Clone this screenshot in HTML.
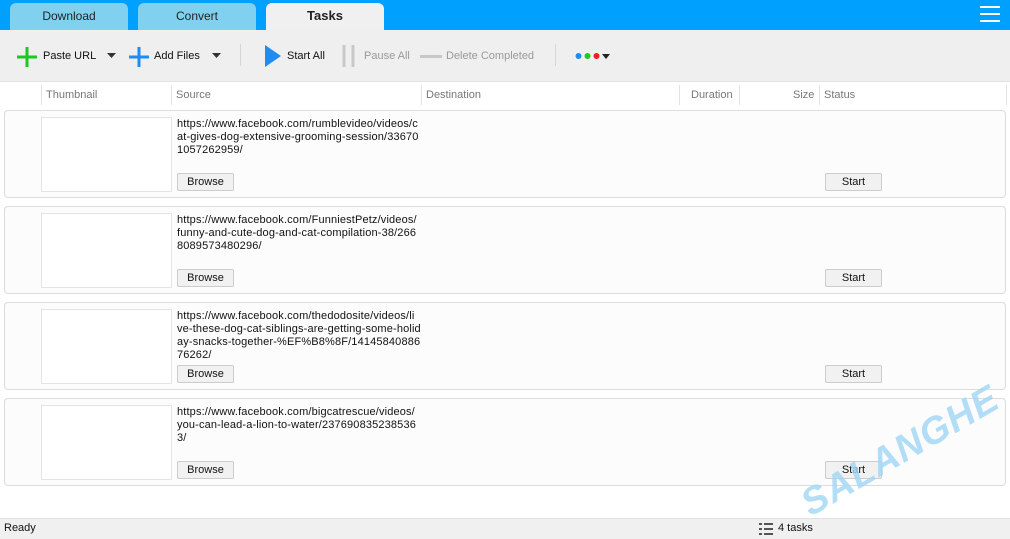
<!DOCTYPE html>
<html><head><meta charset="utf-8"><style>
*{box-sizing:border-box;margin:0;padding:0}
body{width:1010px;height:539px;overflow:hidden;background:#fff;font-family:"Liberation Sans",sans-serif;font-size:11px;color:#111;position:relative}
.top{position:absolute;left:0;top:0;width:1010px;height:30px;background:#00a0fe}
.tab{position:absolute;top:3px;height:27px;width:118px;border-radius:6px 6px 0 0;background:#80d1f0;text-align:center;line-height:26px;font-size:12px;color:#222}
.menu{position:absolute;right:10px;top:6px;width:20px}
.menu i{display:block;height:2px;background:#fff;margin-bottom:5px}
.tb{position:absolute;top:30px;left:0;width:1010px;height:52px;background:#efefef;border-bottom:1px solid #e2e2e2}
.t{position:absolute;top:20px;font-size:11px}
.sep{position:absolute;top:14px;width:1px;height:22px;background:#d6d6d6}
.hdr{position:absolute;top:82px;left:0;width:1010px;height:24px}
.hdr span{position:absolute;top:7px;color:#777;font-size:11px}
.hdr b{position:absolute;top:3px;width:1px;height:20px;background:#e2e2e2}
.card{position:absolute;left:4px;width:1002px;height:88px;border:1px solid #dcdcdc;border-radius:4px;background:#fcfcfc}
.th{position:absolute;left:36px;top:6px;width:131px;height:75px;border:1px solid #e4e4e4;background:#fff}
.src{position:absolute;left:172px;top:7px;line-height:13px;font-size:11px;white-space:nowrap;letter-spacing:0.15px}
.btn{position:absolute;height:18px;border:1px solid #ccc;border-radius:2px;background:#f1f1f1;text-align:center;line-height:16px;font-size:11px}
.status{position:absolute;left:0;top:518px;width:1010px;height:21px;background:#f0f0f0;border-top:1px solid #e0e0e0}
.wm{position:absolute;left:795px;top:490px;font:italic bold 38px "Liberation Sans",sans-serif;color:#9fd6f5;opacity:.8;transform:rotate(-30deg);transform-origin:left top;letter-spacing:1px;line-height:1}
</style></head><body>
<div class="top"></div>
<div class="tab" style="left:10px">Download</div>
<div class="tab" style="left:138px">Convert</div>
<div class="tab" style="left:266px;background:#f0f0f0;font-weight:bold;font-size:13px">Tasks</div>
<div class="menu"><i></i><i></i><i></i></div>
<div class="tb">
<svg style="position:absolute;left:16px;top:16px" width="22" height="22"><path d="M11 1v20M1 11h20" stroke="#1ec81e" stroke-width="3"/></svg>
<span class="t" style="left:43px">Paste URL</span>
<svg style="position:absolute;left:107px;top:23px" width="9" height="5"><path d="M0 0h9L4.5 5z" fill="#333"/></svg>
<svg style="position:absolute;left:128px;top:16px" width="22" height="22"><path d="M11 1v20M1 11h20" stroke="#1e8cf0" stroke-width="3"/></svg>
<span class="t" style="left:154px">Add Files</span>
<svg style="position:absolute;left:212px;top:23px" width="9" height="5"><path d="M0 0h9L4.5 5z" fill="#333"/></svg>
<div class="sep" style="left:240px"></div>
<svg style="position:absolute;left:265px;top:15px" width="16" height="22"><path d="M0 0L16 11L0 22z" fill="#1e8cf0"/></svg>
<span class="t" style="left:287px">Start All</span>
<svg style="position:absolute;left:342px;top:15px" width="14" height="22"><path d="M2 0v22M11 0v22" stroke="#c8c8c8" stroke-width="3"/></svg>
<span class="t" style="left:364px;color:#999">Pause All</span>
<div style="position:absolute;left:420px;top:25px;width:22px;height:3px;background:#c8c8c8"></div>
<span class="t" style="left:446px;color:#999">Delete Completed</span>
<div class="sep" style="left:555px"></div>
<svg style="position:absolute;left:575px;top:22px" width="36" height="8"><circle cx="3.5" cy="4" r="3" fill="#1e8cf0"/><circle cx="12.5" cy="4" r="3" fill="#1ec81e"/><circle cx="21.5" cy="4" r="3" fill="#f01e1e"/><path d="M27 2h8l-4 5z" fill="#222"/></svg>
</div>
<div class="hdr">
<b style="left:41px"></b><span style="left:46px">Thumbnail</span>
<b style="left:171px"></b><span style="left:176px">Source</span>
<b style="left:421px"></b><span style="left:426px">Destination</span>
<b style="left:679px"></b><span style="left:691px">Duration</span>
<b style="left:739px"></b><span style="left:793px">Size</span>
<b style="left:819px"></b><span style="left:824px">Status</span>
<b style="left:1006px"></b>
</div>

<div class="card" style="top:110px"><div class="th"></div><div class="src">https://www.facebook.com/rumblevideo/videos/c<br>at-gives-dog-extensive-grooming-session/33670<br>1057262959/</div><div class="btn" style="left:172px;top:62px;width:57px">Browse</div><div class="btn" style="left:820px;top:62px;width:57px">Start</div></div>
<div class="card" style="top:206px"><div class="th"></div><div class="src">https://www.facebook.com/FunniestPetz/videos/<br>funny-and-cute-dog-and-cat-compilation-38/266<br>8089573480296/</div><div class="btn" style="left:172px;top:62px;width:57px">Browse</div><div class="btn" style="left:820px;top:62px;width:57px">Start</div></div>
<div class="card" style="top:302px"><div class="th"></div><div class="src">https://www.facebook.com/thedodosite/videos/li<br>ve-these-dog-cat-siblings-are-getting-some-holid<br>ay-snacks-together-%EF%B8%8F/14145840886<br>76262/</div><div class="btn" style="left:172px;top:62px;width:57px">Browse</div><div class="btn" style="left:820px;top:62px;width:57px">Start</div></div>
<div class="card" style="top:398px"><div class="th"></div><div class="src">https://www.facebook.com/bigcatrescue/videos/<br>you-can-lead-a-lion-to-water/237690835238536<br>3/</div><div class="btn" style="left:172px;top:62px;width:57px">Browse</div><div class="btn" style="left:820px;top:62px;width:57px">Start</div></div>

<div class="wm">SALANGHE</div>
<div class="status">
<span style="position:absolute;left:4px;top:3px">Ready</span>
<svg style="position:absolute;left:759px;top:4px" width="14" height="12"><path d="M0 1h3M5 1h9M0 6h3M5 6h9M0 11h3M5 11h9" stroke="#555" stroke-width="2"/></svg>
<span style="position:absolute;left:778px;top:3px">4 tasks</span>
</div>
</body></html>
